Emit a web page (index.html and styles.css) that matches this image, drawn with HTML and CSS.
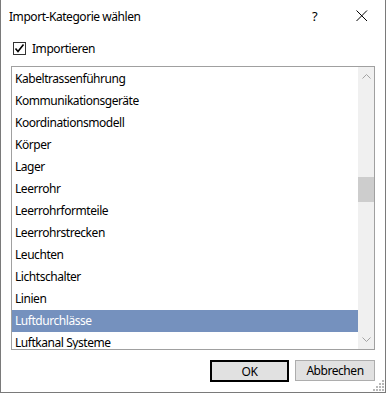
FILE: index.html
```html
<!DOCTYPE html>
<html lang="de">

<head>
  <meta charset="UTF-8">
  <title>Import-Kategorie wählen</title>
  <link rel="stylesheet" href="styles.css">
</head>

<body>
  <div class="dialog">
    <div class="titlebar">
      <span class="title">Import-Kategorie wählen</span>
      <span class="help">?</span>
      <span class="close">
        <svg width="12" height="12" viewBox="0 0 12 12">
          <path d="M0.5 0.5 L11 11 M11 0.5 L0.5 11" stroke="#000" stroke-width="1" fill="none" />
        </svg>
      </span>
    </div>

    <div class="content">
      <label class="check-row">
        <span class="checkbox">
          <svg width="11" height="11" viewBox="0 0 11 11">
            <path d="M1.5 5.5 L4 8.5 L9.5 1.5" stroke="#000" stroke-width="1.6" fill="none" />
          </svg>
        </span>
        <span>Importieren</span>
      </label>

      <div class="listbox">
        <ul class="items">
          <li>Kabeltrassenführung</li>
          <li>Kommunikationsgeräte</li>
          <li>Koordinationsmodell</li>
          <li>Körper</li>
          <li>Lager</li>
          <li>Leerrohr</li>
          <li>Leerrohrformteile</li>
          <li>Leerrohrstrecken</li>
          <li>Leuchten</li>
          <li>Lichtschalter</li>
          <li>Linien</li>
          <li class="selected">Luftdurchlässe</li>
          <li>Luftkanal Systeme</li>
        </ul>
        <div class="scrollbar">
          <svg class="arrow" width="9" height="5" viewBox="0 0 9 5">
            <path d="M0.5 4.5 L4.5 0.5 L8.5 4.5" stroke="#a3a3a3" fill="none" />
          </svg>
          <div class="track">
            <div class="thumb"></div>
          </div>
          <svg class="arrow" width="9" height="5" viewBox="0 0 9 5">
            <path d="M0.5 0.5 L4.5 4.5 L8.5 0.5" stroke="#a3a3a3" fill="none" />
          </svg>
        </div>
      </div>

      <div class="buttons">
        <button class="btn default">OK</button>
        <button class="btn">Abbrechen</button>
      </div>
    </div>

    <svg class="grip" width="11" height="11" viewBox="0 0 11 11">
      <g fill="#b8b8b8">
        <rect x="9" y="0" width="2" height="2" />
        <rect x="6" y="3" width="2" height="2" />
        <rect x="9" y="3" width="2" height="2" />
        <rect x="3" y="6" width="2" height="2" />
        <rect x="6" y="6" width="2" height="2" />
        <rect x="9" y="6" width="2" height="2" />
        <rect x="0" y="9" width="2" height="2" />
        <rect x="3" y="9" width="2" height="2" />
        <rect x="6" y="9" width="2" height="2" />
        <rect x="9" y="9" width="2" height="2" />
      </g>
    </svg>
  </div>
</body>

</html>
```

FILE: styles.css
```css
/* Import dialog */
body {
  margin: 0;
  padding: 0;
  background: #fff;
}

.dialog {
  position: relative;
  width: 384px;
  height: 392px;
  background: #fff;
  border-left: 1px solid #7a7a7a;
  border-right: 1px solid #7a7a7a;
  border-bottom: 1px solid #7a7a7a;
  font-family: "Noto Sans", "Open Sans", sans-serif;
  font-size: 12px;
  letter-spacing: -0.45px;
  color: #000;
}

.titlebar {
  height: 32px;
  display: flex;
  align-items: center;
  padding-left: 8px;
}

.title {
  flex: 1;
}

.help {
  width: 10px;
  margin-right: 34px;
  font-size: 13px;
}

.close {
  width: 12px;
  height: 12px;
  margin-right: 17px;
  display: flex;
}

.content {
  padding: 9px 10px 0 10px;
}

.check-row {
  display: flex;
  align-items: center;
  gap: 6px;
  height: 14px;
  padding-left: 2px;
}

.checkbox {
  width: 11px;
  height: 11px;
  border: 1px solid #333;
  display: flex;
}

.listbox {
  margin-top: 11px;
  height: 282px;
  border: 1px solid #a0a0a0;
  display: flex;
  overflow: hidden;
}

.items {
  flex: 1;
  list-style: none;
  margin: 0;
  padding: 1px 0 0 0;
  overflow: hidden;
}

.items li {
  height: 22px;
  line-height: 22px;
  padding-left: 3px;
}

.items li.selected {
  background: #7591be;
  color: #fff;
}

.scrollbar {
  width: 16px;
  background: #f0f0f0;
  display: flex;
  flex-direction: column;
  align-items: center;
}

.scrollbar .arrow {
  margin: 7px 0;
}

.track {
  flex: 1;
  width: 100%;
  padding-top: 91px;
}

.thumb {
  height: 25px;
  background: #cdcdcd;
}

.buttons {
  display: flex;
  justify-content: flex-end;
  gap: 6px;
  margin-top: 10px;
}

.btn {
  width: 80px;
  height: 21px;
  padding: 0;
  background: #e1e1e1;
  border: 1px solid #adadad;
  font-family: "Noto Sans", "Open Sans", sans-serif;
  font-size: 12px;
  letter-spacing: -0.45px;
  color: #000;
}

.btn.default {
  width: 79px;
  height: 22px;
  border: 2px solid #000;
}

.grip {
  position: absolute;
  right: 1px;
  bottom: 1px;
}
```
